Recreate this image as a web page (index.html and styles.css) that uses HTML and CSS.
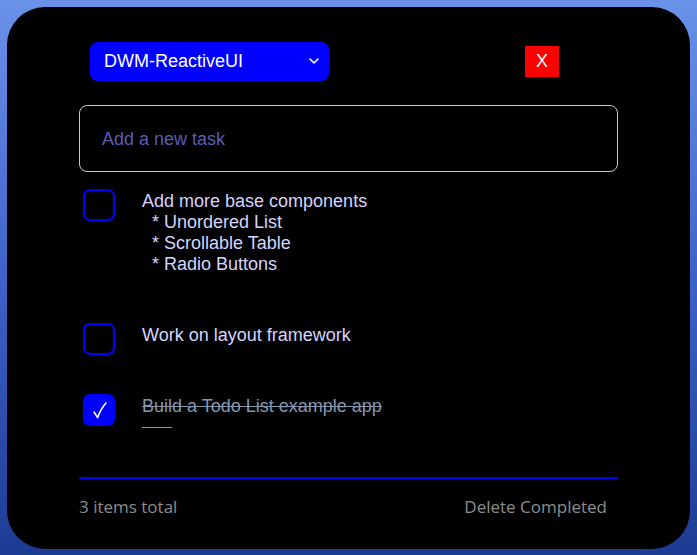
FILE: index.html
```html
<!DOCTYPE html>
<html>
<head>
<meta charset="utf-8">
<link rel="stylesheet" href="styles.css">
</head>
<body>
<div class="panel">
  <div class="header">
    <div class="select">
      <span class="select-label">DWM-ReactiveUI</span>
      <svg class="chevron" width="10" height="6" viewBox="0 0 10 6"><path d="M1 1 L5 5 L9 1" fill="none" stroke="#fff" stroke-width="1.6" stroke-linecap="round" stroke-linejoin="round"/></svg>
    </div>
    <div class="close">X</div>
  </div>
  <div class="input"><span class="placeholder">Add a new task</span></div>
  <div class="tasks">
    <div class="task">
      <div class="check"></div>
      <div class="text">Add more base components
  * Unordered List
  * Scrollable Table
  * Radio Buttons</div>
    </div>
    <div class="task">
      <div class="check"></div>
      <div class="text">Work on layout framework</div>
    </div>
    <div class="task">
      <div class="check done"><svg width="14" height="17" viewBox="0 0 14 17"><path d="M1.2 10.2 L4.6 15.6 Q8 6.5 13 1" fill="none" stroke="#fff" stroke-width="1.6" stroke-linecap="round" stroke-linejoin="round"/></svg></div>
      <div class="text done">Build a Todo List example app
      </div>
    </div>
  </div>
  <div class="footer">
    <span class="count">3 items total</span>
    <span class="delete">Delete Completed</span>
  </div>
</div>
</body>
</html>
```
FILE: styles.css
```css
html, body {
  margin: 0;
  height: 100%;
}
body {
  background: linear-gradient(180deg, #6a92e9 0%, #3d63c9 50%, #1c3c93 100%);
  padding: 7px;
  box-sizing: border-box;
  font-family: "Liberation Sans", Arial, sans-serif;
}
.panel {
  background: #000;
  border-radius: 38px;
  height: 542px;
  width: 683px;
  box-sizing: border-box;
  padding: 35px 72px 0 72px;
  display: flex;
  flex-direction: column;
}
.header {
  display: flex;
  justify-content: space-between;
  align-items: center;
  padding: 0 59px 0 11px;
  height: 39px;
}
.select {
  width: 239px;
  height: 39px;
  background: #0000ff;
  border-radius: 8px;
  box-sizing: border-box;
  padding: 0 10px 0 14px;
  display: flex;
  align-items: center;
  justify-content: space-between;
  color: #fff;
  font-size: 18px;
}
.chevron {
  display: block;
  margin-top: -2px;
}
.close {
  width: 34px;
  height: 31px;
  background: #ff0000;
  color: #fff;
  font-size: 18px;
  display: flex;
  align-items: center;
  justify-content: center;
}
.input {
  margin-top: 24px;
  height: 67px;
  border: 1px solid #c8c8c8;
  border-radius: 8px;
  box-sizing: border-box;
  display: flex;
  align-items: center;
  padding-left: 22px;
}
.placeholder {
  color: #5a5cb4;
  font-size: 18px;
  margin-top: 1px;
}
.tasks {
  margin-top: 17px;
  display: flex;
  flex-direction: column;
  gap: 39px;
}
.task {
  display: flex;
  align-items: flex-start;
  padding-left: 4px;
}
.check {
  width: 32px;
  height: 32px;
  box-sizing: border-box;
  border: 2px solid #0000ff;
  border-radius: 7px;
  flex: none;
  display: flex;
  align-items: center;
  justify-content: center;
}
.check svg {
  display: block;
  margin-left: 1px;
}
.check.done {
  background: #0000ff;
}
.text {
  margin-left: 27px;
  white-space: pre;
  color: #d6d4ff;
  font-size: 18px;
  line-height: 21px;
  padding: 2px 0 9px;
}
.text.done {
  color: #8796ad;
  text-decoration: line-through;
}
.footer {
  margin-top: 30px;
  border-top: 2px solid #0000ff;
  display: flex;
  justify-content: space-between;
  align-items: center;
  padding: 16px 11px 0 0;
  font-family: "Open Sans", sans-serif;
  font-size: 17px;
  color: #8c8c8c;
}
```
